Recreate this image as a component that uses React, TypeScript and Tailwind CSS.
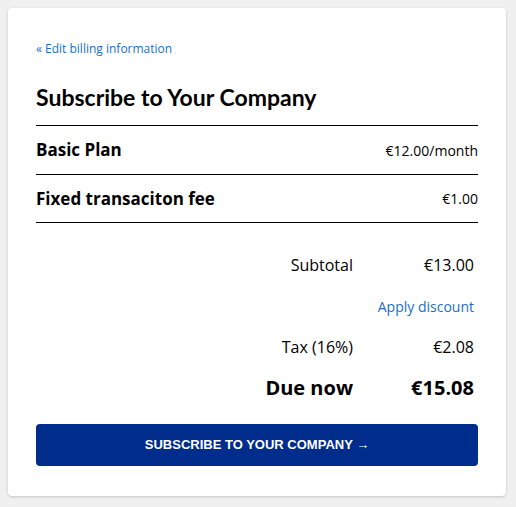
export default function App() {
  return (
    <div className="min-h-[507px] bg-[#f0f0f0] pt-2 pl-2 pr-[10px]" style={{ fontFamily: '"Open Sans", sans-serif' }}>
      <div className="rounded bg-white px-7 pt-[33px] pb-[30px] shadow-[0_1px_3px_rgba(0,0,0,0.18)]">
        <a href="#" className="block text-[12px] leading-[16px] text-[#1a6fc8]">
          « Edit billing information
        </a>
        <h1
          className="mt-[26px] text-[23px] font-bold leading-[28px] text-black"
          style={{ fontFamily: "Lato, sans-serif" }}
        >
          Subscribe to Your Company
        </h1>
        <div className="mt-[14px] border-t border-black">
          <div className="flex h-[49px] items-center justify-between border-b border-black">
            <span className="text-[17px] font-bold">Basic Plan</span>
            <span className="text-[14px]">€12.00/month</span>
          </div>
          <div className="flex h-[48px] items-center justify-between border-b border-black">
            <span className="text-[17px] font-bold">Fixed transaciton fee</span>
            <span className="text-[14px]">€1.00</span>
          </div>
        </div>
        <div className="mt-[31px] grid grid-cols-[1fr_104px] gap-x-[17px] pr-1 text-[16px] text-black">
          <span className="text-right leading-[22px]">Subtotal</span>
          <span className="text-right leading-[22px]">€13.00</span>
          <span className="col-start-2 mt-[21px] text-right text-[14px] leading-[20px] text-[#1a6fc8]">Apply discount</span>
          <span className="mt-[19px] text-right leading-[22px]">Tax (16%)</span>
          <span className="mt-[19px] text-right leading-[22px]">€2.08</span>
          <span className="mt-[16px] text-right text-[20px] font-bold leading-[28px]">Due now</span>
          <span className="mt-[16px] text-right text-[20px] font-bold leading-[28px]">€15.08</span>
        </div>
        <button
          className="mt-[22px] flex h-[42px] w-full items-center justify-center rounded bg-[#002c8b] text-[13px] font-bold uppercase text-white"
          style={{ fontFamily: '"Liberation Sans", Arial, sans-serif' }}
        >
          Subscribe to Your Company →
        </button>
      </div>
    </div>
  );
}
